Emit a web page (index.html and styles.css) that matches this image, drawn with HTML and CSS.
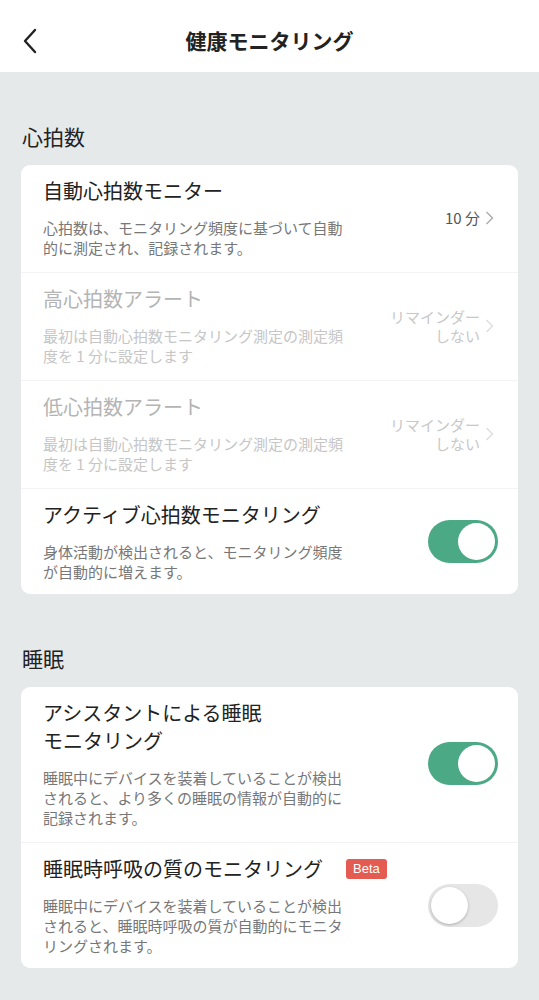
FILE: index.html
```html
<!DOCTYPE html>
<html lang="ja">
<head>
    <meta charset="UTF-8">
    <meta name="viewport" content="width=device-width, initial-scale=1.0">
    <title>健康モニタリング</title>
    <link rel="stylesheet" href="styles.css">
</head>
<body>
    <header class="topbar">
        <svg class="back" width="16" height="26" viewBox="0 0 16 26">
            <path d="M13 2 L3 13 L13 24" fill="none" stroke="#222" stroke-width="2.4" stroke-linecap="round" stroke-linejoin="round"/>
        </svg>
        <h1>健康モニタリング</h1>
    </header>

    <h2 class="section-title">心拍数</h2>
    <div class="card">
        <div class="row">
            <div class="text">
                <div class="title">自動心拍数モニター</div>
                <div class="desc">心拍数は、モニタリング頻度に基づいて自動的に測定され、記録されます。</div>
            </div>
            <div class="value">
                <span>10 分</span>
                <svg class="chev" width="9" height="14" viewBox="0 0 9 14"><path d="M1.5 1 L7.5 7 L1.5 13" fill="none" stroke="#aaa" stroke-width="1.4"/></svg>
            </div>
        </div>
        <div class="row disabled">
            <div class="text">
                <div class="title">高心拍数アラート</div>
                <div class="desc">最初は自動心拍数モニタリング測定の測定頻度を 1 分に設定します</div>
            </div>
            <div class="value">
                <span>リマインダー<br>しない</span>
                <svg class="chev" width="9" height="14" viewBox="0 0 9 14"><path d="M1.5 1 L7.5 7 L1.5 13" fill="none" stroke="#ddd" stroke-width="1.4"/></svg>
            </div>
        </div>
        <div class="row disabled">
            <div class="text">
                <div class="title">低心拍数アラート</div>
                <div class="desc">最初は自動心拍数モニタリング測定の測定頻度を 1 分に設定します</div>
            </div>
            <div class="value">
                <span>リマインダー<br>しない</span>
                <svg class="chev" width="9" height="14" viewBox="0 0 9 14"><path d="M1.5 1 L7.5 7 L1.5 13" fill="none" stroke="#ddd" stroke-width="1.4"/></svg>
            </div>
        </div>
        <div class="row">
            <div class="text">
                <div class="title">アクティブ心拍数モニタリング</div>
                <div class="desc">身体活動が検出されると、モニタリング頻度が自動的に増えます。</div>
            </div>
            <div class="toggle on"><span class="knob"></span></div>
        </div>
    </div>

    <h2 class="section-title">睡眠</h2>
    <div class="card">
        <div class="row">
            <div class="text">
                <div class="title">アシスタントによる睡眠<br>モニタリング</div>
                <div class="desc">睡眠中にデバイスを装着していることが検出されると、より多くの睡眠の情報が自動的に記録されます。</div>
            </div>
            <div class="toggle on"><span class="knob"></span></div>
        </div>
        <div class="row">
            <div class="text">
                <div class="title with-badge">睡眠時呼吸の質のモニタリング<span class="badge">Beta</span></div>
                <div class="desc">睡眠中にデバイスを装着していることが検出されると、睡眠時呼吸の質が自動的にモニタリングされます。</div>
            </div>
            <div class="toggle"><span class="knob"></span></div>
        </div>
    </div>
</body>
</html>
```

FILE: styles.css
```css
body {
    margin: 0;
    background: #e6e9ea;
    font-family: "Noto Sans CJK JP", "Noto Sans", sans-serif;
    color: #222;
    padding-bottom: 30px;
}
.topbar {
    height: 72px;
    background: #fff;
    display: flex;
    align-items: center;
    justify-content: center;
    position: relative;
}
.topbar h1 {
    margin: 0;
    font-size: 21px;
    font-weight: 700;
    line-height: 28px;
    padding-top: 8px;
}
.back {
    position: absolute;
    left: 22px;
    top: 28px;
}
.section-title {
    margin: 0;
    padding: 50px 22px 15px;
    font-size: 21px;
    font-weight: 400;
    line-height: 28px;
}
.card {
    margin: 0 21px;
    background: #fff;
    border-radius: 9px;
}
.row {
    display: flex;
    align-items: center;
    padding: 12px 20px 14px 22px;
}
.row + .row {
    border-top: 1px solid #f3f3f3;
}
.row:last-child {
    padding-bottom: 12px;
}
.text {
    width: 302px;
}
.title {
    font-size: 20px;
    line-height: 28px;
}
.desc {
    margin-top: 13px;
    font-size: 15px;
    line-height: 20px;
    color: #777;
}
.with-badge {
    display: flex;
    align-items: center;
    white-space: nowrap;
}
.badge {
    margin-left: 23px;
    background: #e45b52;
    color: #fff;
    font-family: "Liberation Sans", sans-serif;
    font-size: 13px;
    line-height: 20px;
    padding: 0 7px;
    border-radius: 3px;
}
.disabled .title {
    color: #b4b4b4;
}
.disabled .desc {
    color: #c6c6c6;
}
.value {
    margin-left: auto;
    display: flex;
    align-items: center;
    font-size: 15px;
    line-height: 19px;
    color: #555;
    text-align: right;
    padding-right: 4px;
}
.value .chev {
    margin-left: 5px;
}
.disabled .value {
    color: #c8c8c8;
}
.toggle {
    margin-left: auto;
    width: 70px;
    height: 43px;
    border-radius: 22px;
    background: #e6e6e6;
    position: relative;
}
.toggle.on {
    background: #4ba985;
}
.knob {
    position: absolute;
    top: 3px;
    left: 3px;
    width: 37px;
    height: 37px;
    border-radius: 50%;
    background: #fff;
    box-shadow: 0 1px 3px rgba(0, 0, 0, 0.25);
}
.toggle.on .knob {
    left: auto;
    right: 3px;
    box-shadow: none;
}
```
